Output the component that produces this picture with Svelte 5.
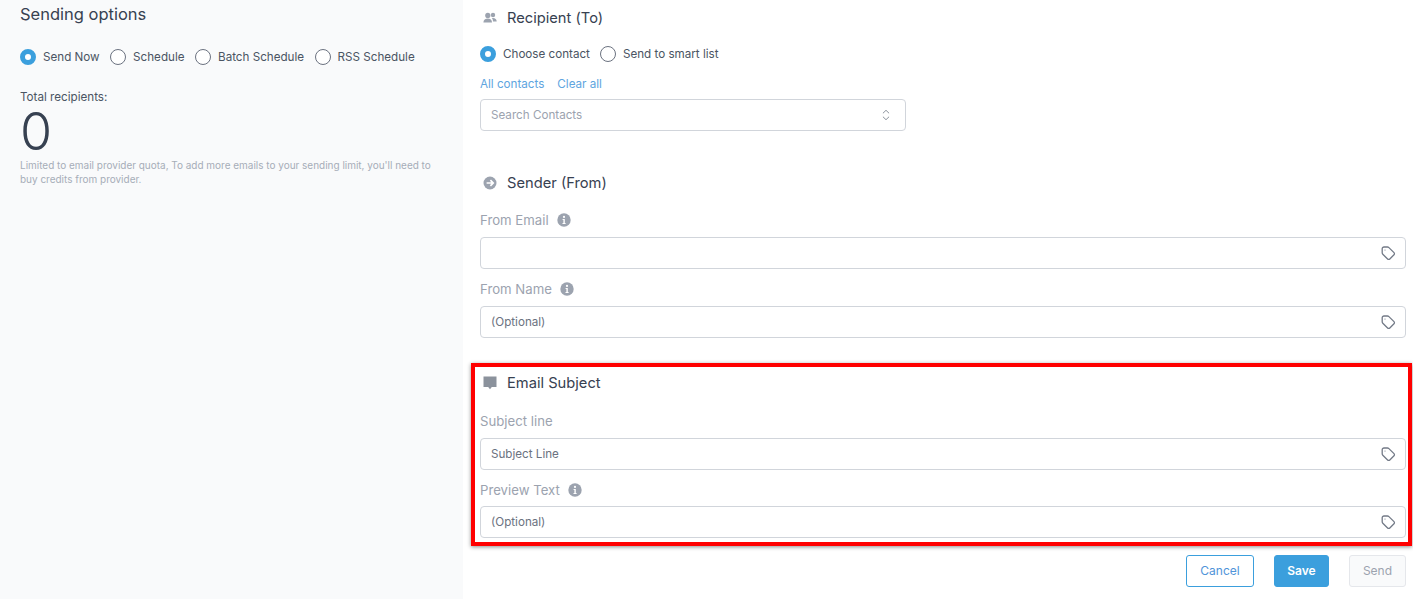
<script>
  const modes = [
    { label: 'Send Now', on: true },
    { label: 'Schedule', on: false },
    { label: 'Batch Schedule', on: false },
    { label: 'RSS Schedule', on: false }
  ];
  const targets = [
    { label: 'Choose contact', on: true },
    { label: 'Send to smart list', on: false }
  ];
</script>

{#snippet tag()}
  <svg class="tag" viewBox="0 0 16 16" width="16" height="16" fill="none" stroke="#737a87" stroke-width="1.3" stroke-linejoin="round">
    <path d="M2.2 3.8 C2.2 2.7 3 2 4 2 H7.4 C8 2 8.5 2.2 8.9 2.6 L14 7.6 C14.6 8.2 14.6 9.2 14 9.8 L9.8 14 C9.2 14.6 8.2 14.6 7.6 14 L2.8 9.2 C2.4 8.8 2.2 8.3 2.2 7.8 Z" />
    <circle cx="5" cy="5" r="0.6" fill="#737a87" stroke="none" />
  </svg>
{/snippet}

{#snippet info()}
  <svg class="info" viewBox="0 0 14 14" width="14" height="14">
    <circle cx="7" cy="7" r="6.7" fill="#9ca3af" />
    <circle cx="7" cy="3.9" r="1.1" fill="#fff" />
    <path d="M5.6 6h2.2v4h.8v1.1H5.5V10h.9V7.1h-.8z" fill="#fff" />
  </svg>
{/snippet}

{#snippet field(value)}
  <div class="input">
    <span class="value">{value}</span>
    {@render tag()}
  </div>
{/snippet}

<div class="page">
  <aside class="side">
    <h2 class="side-title">Sending options</h2>
    <div class="radios side-radios">
      {#each modes as m}
        <label class="radio"><span class="dot" class:on={m.on}></span>{m.label}</label>
      {/each}
    </div>
    <div class="total-label">Total recipients:</div>
    <div class="total">0</div>
    <p class="note">Limited to email provider quota, To add more emails to your sending limit, you'll need to buy credits from provider.</p>
  </aside>

  <main class="form">
    <section class="sec recipient">
      <h3 class="head">
        <svg class="head-icon" viewBox="0 0 14 14" width="14" height="14" fill="#9ca3af">
          <circle cx="4.8" cy="4.4" r="2.6" />
          <path d="M0.4 11.5 C0.4 8.8 2.4 7.4 4.8 7.4 C7.2 7.4 9 8.8 9 11.5 Z" />
          <circle cx="10" cy="4" r="2.2" />
          <path d="M9.6 7 C11.8 6.8 13.7 8 13.7 10.6 H10 C10 9 9.6 7.8 8.8 7.2 Z" />
        </svg>
        Recipient (To)
      </h3>
      <div class="radios target-radios">
        {#each targets as t}
          <label class="radio"><span class="dot" class:on={t.on}></span>{t.label}</label>
        {/each}
      </div>
      <div class="links"><span>All contacts</span><span>Clear all</span></div>
      <div class="input select">
        <span class="placeholder">Search Contacts</span>
        <svg class="updown" viewBox="0 0 8 12" width="8" height="12" fill="none" stroke="#8b929c" stroke-width="1" stroke-linecap="round" stroke-linejoin="round">
          <path d="M1.2 4 4 1.3 6.8 4" />
          <path d="M1.2 8 4 10.7 6.8 8" />
        </svg>
      </div>
    </section>

    <section class="sec sender">
      <h3 class="head">
        <svg class="head-icon" viewBox="0 0 14 14" width="14" height="14">
          <circle cx="7" cy="7" r="6.5" fill="#9ca3af" />
          <path d="M3.6 7H10M7.4 4.2 10.2 7 7.4 9.8" fill="none" stroke="#fff" stroke-width="1.7" />
        </svg>
        Sender (From)
      </h3>
      <div class="label first">From Email {@render info()}</div>
      {@render field('')}
      <div class="label">From Name {@render info()}</div>
      {@render field('(Optional)')}
    </section>

    <section class="subject">
      <h3 class="head">
        <svg class="head-icon" viewBox="0 0 14 14" width="14" height="14" fill="#8b929c">
          <path d="M0.5 0.5 H13.5 V11 H8.8 L7 13.2 L5.2 11 H0.5 Z" />
        </svg>
        Email Subject
      </h3>
      <div class="label first">Subject line</div>
      {@render field('Subject Line')}
      <div class="label">Preview Text {@render info()}</div>
      {@render field('(Optional)')}
    </section>

    <div class="actions">
      <button class="btn cancel">Cancel</button>
      <button class="btn save">Save</button>
      <button class="btn send">Send</button>
    </div>
  </main>
</div>

<style>
  :global(body) {
    margin: 0;
    background: #fff;
  }
  .page {
    display: flex;
    width: 1413px;
    height: 599px;
    overflow: hidden;
    font-family: Inter, "Liberation Sans", sans-serif;
    font-size: 11.65px;
    color: #374151;
  }
  .side {
    flex: 0 0 463px;
    box-sizing: border-box;
    background: #f9fafb;
    padding: 4px 20px 0;
  }
  .side-title {
    margin: 0;
    font-size: 16.5px;
    line-height: 20px;
    font-weight: 400;
    color: #374151;
  }
  .radios {
    display: flex;
  }
  .side-radios {
    margin-top: 25px;
    gap: 10.5px;
  }
  .target-radios {
    margin-top: 18px;
    gap: 10px;
  }
  .radio {
    display: flex;
    align-items: center;
    gap: 7px;
    height: 16px;
    line-height: 16px;
    color: #4b5563;
  }
  .dot {
    box-sizing: border-box;
    width: 16px;
    height: 16px;
    border-radius: 50%;
    border: 1px solid #6b7280;
    background: #fff;
  }
  .dot.on {
    border: 5px solid #3b9fdd;
  }
  .total-label {
    margin-top: 24px;
    line-height: 16px;
    color: #4b5563;
  }
  .total {
    margin-top: 6px;
    font-size: 52px;
    font-weight: 300;
    line-height: 42px;
    color: #374151;
  }
  .note {
    margin: 5px 0 0;
    width: 423px;
    font-size: 9.98px;
    line-height: 14px;
    color: #a6adb8;
  }
  .form {
    flex: 1;
    box-sizing: border-box;
    padding: 0 1px 0 8px;
    display: flex;
    flex-direction: column;
  }
  .sec {
    padding: 0 6px 0 9px;
  }
  .recipient {
    padding-top: 8px;
  }
  .sender {
    margin-top: 42px;
  }
  .head {
    display: flex;
    align-items: center;
    gap: 10px;
    margin: 0;
    padding-left: 3px;
    font-size: 14.7px;
    line-height: 20px;
    font-weight: 400;
    color: #374151;
  }
  .head-icon {
    flex: none;
  }
  .links {
    display: flex;
    gap: 13px;
    margin-top: 14px;
    line-height: 16px;
    color: #60a5e0;
  }
  .input {
    box-sizing: border-box;
    display: flex;
    align-items: center;
    justify-content: space-between;
    height: 32px;
    padding: 0 10px;
    background: #fff;
    border: 1px solid #d1d5db;
    border-radius: 4px;
    line-height: 16px;
    color: #6b7280;
  }
  .select {
    width: 426px;
    margin-top: 7px;
    padding-right: 15px;
  }
  .placeholder {
    color: #9ca3af;
  }
  .value {
    color: #6b7280;
  }
  .tag {
    flex: none;
    margin-right: -1px;
  }
  .label {
    display: flex;
    align-items: center;
    gap: 8px;
    height: 20px;
    margin-top: 10px;
    margin-bottom: 7px;
    font-size: 13.2px;
    color: #9ca3af;
  }
  .label.first {
    margin-top: 17px;
    margin-bottom: 7px;
  }
  .subject .label {
    margin-top: 10px;
    margin-bottom: 6px;
  }
  .subject .label.first {
    margin-top: 18px;
    margin-bottom: 7px;
  }
  .subject {
    box-sizing: border-box;
    height: 183px;
    margin-top: 25px;
    padding: 6px 2px 0 5px;
    border: 4px solid #f00;
    box-shadow: 0 1px 4px rgba(0, 0, 0, 0.45);
  }
  .actions {
    display: flex;
    justify-content: flex-end;
    gap: 20px;
    margin-top: 9px;
    padding-right: 6px;
  }
  .btn {
    box-sizing: border-box;
    height: 32px;
    padding: 0;
    border-radius: 3px;
    font-family: inherit;
    font-size: 12px;
    line-height: 16px;
  }
  .cancel {
    width: 68px;
    background: #fff;
    border: 1px solid #3b9fdd;
    color: #4f94d9;
  }
  .save {
    width: 55px;
    background: #3b9fdd;
    border: 1px solid #3b9fdd;
    color: #fff;
    font-weight: 600;
  }
  .send {
    width: 57px;
    background: #f9fafb;
    border: 1px solid #e5e7eb;
    color: #9ca3af;
  }
</style>
